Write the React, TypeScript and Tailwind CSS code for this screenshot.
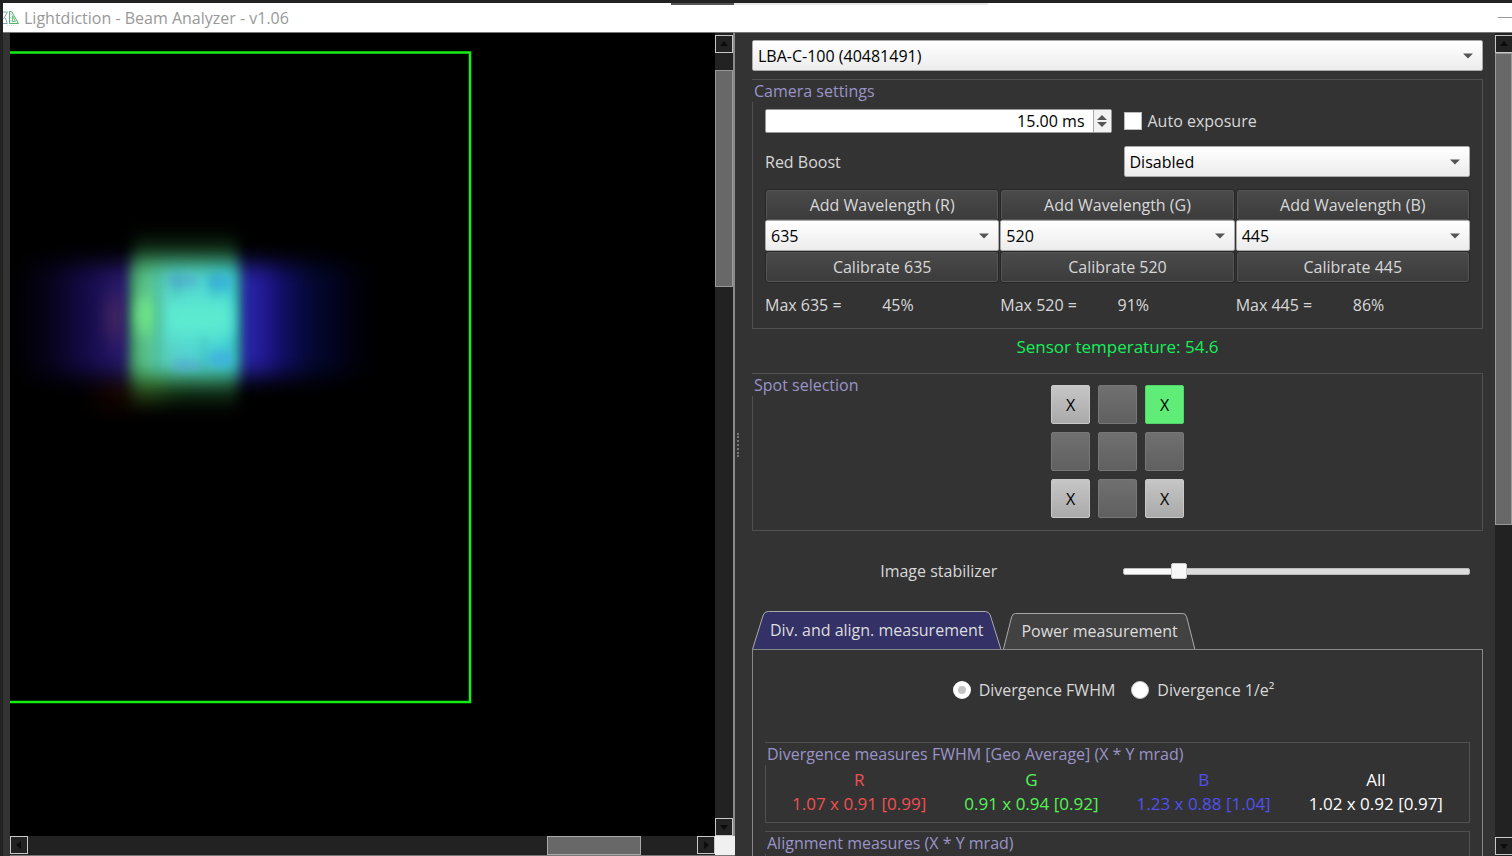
import { useState } from 'react'
import type { ReactNode } from 'react'
import { clsx } from 'clsx'

type Direction = 'up' | 'down' | 'left' | 'right'

const arrowPoints: Record<Direction, string> = {
  up: '1,7 9,7 5,2',
  down: '1,3 9,3 5,8',
  left: '7,1 7,9 2,5',
  right: '3,1 3,9 8,5',
}

const wavelengths = [
  { channel: 'R', value: '635', max: '45%' },
  { channel: 'G', value: '520', max: '91%' },
  { channel: 'B', value: '445', max: '86%' },
]

const divergence = [
  { name: 'R', value: '1.07 x 0.91 [0.99]', color: 'text-[#f05050]' },
  { name: 'G', value: '0.91 x 0.94 [0.92]', color: 'text-[#55f555]' },
  { name: 'B', value: '1.23 x 0.88 [1.04]', color: 'text-[#5050f0]' },
  { name: 'All', value: '1.02 x 0.92 [0.97]', color: 'text-white' },
]

// row by row, null is an empty position
const spots = ['on', null, 'selected', null, null, null, 'on', null, 'on']

function ScrollButton({ direction }: { direction: Direction }) {
  return (
    <button
      aria-label={`Scroll ${direction}`}
      className="flex size-[18px] shrink-0 items-center justify-center border border-[#c8c8c8] bg-[#222]"
    >
      <svg viewBox="0 0 10 10" className="size-2.5">
        <polygon points={arrowPoints[direction]} fill="#0c0c0c" />
      </svg>
    </button>
  )
}

function Select({ label, id, options, className }: { label: string; id: string; options: string[]; className?: string }) {
  return (
    <div className={clsx('relative', className)}>
      <select
        id={id}
        aria-label={label}
        className="block h-[31px] w-full appearance-none rounded-xs border border-[#aaa] bg-linear-to-b from-white to-[#ececec] px-[5px] text-black"
      >
        {options.map((option) => (
          <option key={option}>{option}</option>
        ))}
      </select>
      <svg viewBox="0 0 10 6" className="pointer-events-none absolute top-[13px] right-2.5 h-1.5 w-2.5">
        <polygon points="0,0.5 10,0.5 5,5.5" fill="#555" />
      </svg>
    </div>
  )
}

function Group({ title, className, children }: { title: string; className?: string; children?: ReactNode }) {
  return (
    <section className={clsx('border border-[#505050]', className)}>
      <h2 className="-ml-px w-fit bg-[#333] pl-0.5 leading-[22px] text-[#9a94c8]">{title}</h2>
      {children}
    </section>
  )
}

function DarkButton({ children }: { children: ReactNode }) {
  return (
    <button className="mx-px h-[30px] rounded-xs border border-[#555] bg-linear-to-b from-[#4a4a4a] to-[#3c3c3c] text-[#d8d8d8] outline outline-[#262626]">
      {children}
    </button>
  )
}

function Tab({ label, active, onClick }: { label: string; active: boolean; onClick: () => void }) {
  return (
    <button
      role="tab"
      aria-selected={active}
      onClick={onClick}
      className={clsx('relative px-[18px] text-[#ddd]', active ? 'h-[38px]' : 'h-9')}
    >
      <svg
        viewBox="0 0 200 38"
        preserveAspectRatio="none"
        className="absolute inset-0 size-full"
        fill={active ? '#333166' : '#424242'}
        stroke="#aaa"
      >
        <path d="M0.5 38 L9 4 Q10 0.5 13 0.5 H187 Q190 0.5 191 4 L199.5 38" vectorEffect="non-scaling-stroke" />
      </svg>
      <span className="relative">{label}</span>
    </button>
  )
}

function TitleBar() {
  return (
    <header className="relative mt-[3px] ml-[3px] flex h-[30px] shrink-0 items-center border-b border-[#777] bg-white">
      <svg viewBox="0 0 17 18" className="h-[18px] w-[17px] shrink-0" fill="none">
        <path d="M0 3H4.500L0.500 10M0 14.500H4.500M2.500 9L4 14" stroke="#86a5b8" />
        <path d="M6.500 14.500V2.500H8.500L15.500 14.500Z" stroke="#4db368" />
        <path d="M9.500 12.500V7L12.500 12.500Z" stroke="#4db368" strokeWidth="0.8" />
        <path d="M7 4.500L9.500 6.500M7 8L9.500 10M7 11.500L9.500 12.500M10 6L12 10" stroke="#8fd0a0" strokeWidth="0.8" />
        <path d="M4 16.500H16" stroke="#d5e2da" strokeDasharray="1 1" />
      </svg>
      <h1 className="ml-1 text-[#999]">Lightdiction - Beam Analyzer - v1.06</h1>
      <div className="absolute top-0 left-[44.3%] flex h-0.5 w-[21%]">
        <span className="flex-[62] bg-[#555]" />
        <span className="flex-[250] bg-[#e8e8e8]" />
      </div>
      <button aria-label="Minimize" className="ml-auto flex h-full w-3.5 items-center">
        <span className="h-px w-full bg-[#999]" />
      </button>
    </header>
  )
}

function Blur({ id, x, y }: { id: string; x: number; y: number }) {
  return (
    <filter id={id} x="-100%" y="-100%" width="300%" height="300%" colorInterpolationFilters="sRGB">
      <feGaussianBlur stdDeviation={`${x} ${y}`} />
    </filter>
  )
}

function BeamView() {
  return (
    <svg width="705" height="803" viewBox="10 33 705 803" className="block">
      <defs>
        <Blur id="fine" x={4} y={5} />
        <Blur id="core-edge" x={6} y={9} />
        <Blur id="blue-edge" x={8} y={11} />
        <Blur id="halo" x={7} y={14} />
        <Blur id="soft" x={14} y={14} />
        <linearGradient id="blue">
          <stop offset="0" stopColor="#08031c" stopOpacity="0" />
          <stop offset="0.1" stopColor="#07031c" />
          <stop offset="0.2" stopColor="#150b4a" />
          <stop offset="0.3" stopColor="#2a1a70" />
          <stop offset="0.4" stopColor="#3a3aa0" />
          <stop offset="0.6" stopColor="#2c2cac" />
          <stop offset="0.66" stopColor="#241c9c" />
          <stop offset="0.72" stopColor="#110e66" />
          <stop offset="0.79" stopColor="#050836" />
          <stop offset="0.88" stopColor="#01021a" />
          <stop offset="1" stopColor="#000" stopOpacity="0" />
        </linearGradient>
        <linearGradient id="core">
          <stop offset="0" stopColor="#4aa870" />
          <stop offset="0.18" stopColor="#5cc893" />
          <stop offset="0.38" stopColor="#56d2cc" />
          <stop offset="0.7" stopColor="#4fd8d4" />
          <stop offset="1" stopColor="#35c4d4" />
        </linearGradient>
      </defs>
      <rect x="10" y="33" width="705" height="803" fill="#000" />
      <ellipse cx="122" cy="392" rx="30" ry="12" fill="#200800" filter="url(#soft)" />
      <rect x="14" y="264" width="372" height="112" fill="url(#blue)" filter="url(#blue-edge)" />
      <ellipse cx="115" cy="318" rx="9" ry="24" fill="#55305c" opacity="0.7" filter="url(#blue-edge)" />
      <rect x="133" y="252" width="104" height="138" fill="#2c7a38" filter="url(#halo)" />
      <rect x="136" y="370" width="28" height="22" fill="#4a7a14" opacity="0.7" filter="url(#soft)" />
      <rect x="132" y="266" width="106" height="108" fill="url(#core)" filter="url(#core-edge)" />
      <ellipse cx="146" cy="315" rx="11" ry="20" fill="#72e888" opacity="0.85" filter="url(#core-edge)" />
      <rect x="166" y="298" width="66" height="40" fill="#5cead0" filter="url(#core-edge)" />
      <ellipse cx="182" cy="281" rx="18" ry="6" fill="#53a0cf" filter="url(#fine)" opacity="0.6" />
      <ellipse cx="219" cy="282" rx="12" ry="8" fill="#38a9de" filter="url(#fine)" opacity="0.7" />
      <ellipse cx="187" cy="365" rx="16" ry="6" fill="#5aa4dc" filter="url(#fine)" opacity="0.6" />
      <ellipse cx="220" cy="359" rx="13" ry="8" fill="#3fa8e2" filter="url(#fine)" opacity="0.7" />
      <path
        d="M157 268V374M177 268V298M204 336V374M214 268V298"
        fill="none"
        stroke="#2b9da5"
        strokeWidth="5"
        opacity="0.35"
        filter="url(#fine)"
      />
      <path d="M10 52.500H470V702H10" fill="none" stroke="#14ee14" strokeWidth="2.500" />
    </svg>
  )
}

function CameraPane() {
  return (
    <div className="ml-[3px] flex min-w-0 flex-col border-l-[7px] border-[#333]">
      <div className="flex min-h-0 flex-1">
        <div className="min-w-0 flex-1 overflow-hidden bg-black">
          <BeamView />
        </div>
        <div className="flex w-5 shrink-0 flex-col border-r-2 border-[#8a8a8a] bg-[#222] pt-0.5">
          <ScrollButton direction="up" />
          <div className="flex-[17]" />
          <div className="flex-[216] border border-[#999] bg-[#686868]" />
          <div className="flex-[532]" />
          <ScrollButton direction="down" />
        </div>
      </div>
      <div className="flex h-5 shrink-0 border-b border-[#777] bg-[#222]">
        <div className="flex flex-1">
          <ScrollButton direction="left" />
          <div className="flex-[522]" />
          <div className="flex-[93] border border-[#aaa] bg-[#686868]" />
          <div className="flex-[56]" />
          <ScrollButton direction="right" />
        </div>
        <div className="w-5 bg-[#f0f0f0]" />
      </div>
    </div>
  )
}

function CameraSettings() {
  const [exposure, setExposure] = useState(15)

  return (
    <Group title="Camera settings" className="mt-2 pb-[11px]">
      <div className="mx-3 mt-[7px] grid grid-cols-2 gap-x-3 gap-y-[13px]">
        <div className="flex h-6 rounded-xs border border-[#999] bg-white text-black">
          <input
            aria-label="Exposure time"
            className="min-w-0 flex-1 pr-2 text-right"
            value={`${exposure.toFixed(2)} ms`}
            readOnly
          />
          <div className="flex w-[18px] flex-col items-center justify-center gap-0.5 border-l border-[#aaa] bg-[#f2f2f2]">
            <button aria-label="Increase exposure" onClick={() => setExposure(exposure + 1)}>
              <svg viewBox="0 0 10 5" className="block h-[5px] w-2.5">
                <polygon points="0,5 10,5 5,0" fill="#555" />
              </svg>
            </button>
            <button aria-label="Decrease exposure" onClick={() => setExposure(Math.max(0, exposure - 1))}>
              <svg viewBox="0 0 10 5" className="block h-[5px] w-2.5">
                <polygon points="0,0 10,0 5,5" fill="#555" />
              </svg>
            </button>
          </div>
        </div>
        <label className="flex items-center gap-1.5">
          <input type="checkbox" className="size-[18px] appearance-none border border-[#bbb] bg-white checked:bg-[#5bed78]" />
          Auto exposure
        </label>
        <label htmlFor="red-boost" className="self-center">
          Red Boost
        </label>
        <Select id="red-boost" label="Red Boost" options={['Disabled', 'Enabled']} />
      </div>
      <div className="mx-3 mt-[13px] grid grid-cols-3 gap-x-px">
        {wavelengths.map(({ channel, value, max }) => (
          <div key={channel} className="flex flex-col">
            <DarkButton>Add Wavelength ({channel})</DarkButton>
            <Select id={`wavelength-${channel}`} label={`Wavelength ${channel}`} options={[value]} className="mb-px" />
            <DarkButton>Calibrate {value}</DarkButton>
            <p className="mt-[11px] grid grid-cols-2">
              <span>Max {value} =</span>
              <span>{max}</span>
            </p>
          </div>
        ))}
      </div>
    </Group>
  )
}

function SpotSelection() {
  return (
    <Group title="Spot selection" className="mt-3.5 pb-3">
      <div className="-mt-[11px] grid grid-cols-[repeat(3,39px)] justify-center gap-2">
        {spots.map((spot, i) => (
          <button
            key={i}
            aria-label={`Spot ${i + 1}`}
            className={clsx(
              'size-[39px] rounded-xs border text-black',
              spot === 'selected' && 'border-[#4fd568] bg-[#5fed78]',
              spot === 'on' && 'border-[#c8c8c8] bg-linear-to-b from-[#c6c6c6] to-[#aaa]',
              !spot && 'border-[#777] bg-linear-to-b from-[#707070] to-[#606060]',
            )}
          >
            {spot && 'X'}
          </button>
        ))}
      </div>
    </Group>
  )
}

function Stabilizer() {
  const [value, setValue] = useState(145)
  const percent = value / 10

  return (
    <div className="mx-[13px] mt-7 grid grid-cols-2 items-center gap-x-2.5">
      <label htmlFor="stabilizer" className="text-center">
        Image stabilizer
      </label>
      <input
        id="stabilizer"
        type="range"
        min="0"
        max="1000"
        value={value}
        onChange={(e) => setValue(Number(e.target.value))}
        style={{ background: `linear-gradient(to right, #fafafa ${percent}%, #dcdcdc ${percent}%)` }}
        className="h-[7px] w-full appearance-none rounded-xs border border-[#bbb] [&::-webkit-slider-thumb]:size-4 [&::-webkit-slider-thumb]:appearance-none [&::-webkit-slider-thumb]:rounded-xs [&::-webkit-slider-thumb]:border [&::-webkit-slider-thumb]:border-[#ccc] [&::-webkit-slider-thumb]:bg-[#f8f8f8]"
      />
    </div>
  )
}

function Measurements() {
  const [tab, setTab] = useState('divergence')
  const radio =
    'size-[18px] appearance-none rounded-full border border-[#ccc] bg-white checked:border-[5px] checked:border-white checked:bg-[#c4c4c4]'

  return (
    <div className="mt-7">
      <div role="tablist" className="flex items-end gap-0.5">
        <Tab label="Div. and align. measurement" active={tab === 'divergence'} onClick={() => setTab('divergence')} />
        <Tab label="Power measurement" active={tab === 'power'} onClick={() => setTab('power')} />
      </div>
      <div className="border border-[#888] px-3 pb-3">
        <div className="mt-7 flex justify-center gap-4 pr-2">
          <label className="flex items-center gap-2">
            <input type="radio" name="width" defaultChecked className={radio} />
            Divergence FWHM
          </label>
          <label className="flex items-center gap-2">
            <input type="radio" name="width" className={radio} />
            Divergence 1/e²
          </label>
        </div>
        <Group title="Divergence measures FWHM [Geo Average] (X * Y mrad)" className="mt-10 pb-1.5">
          <table className="mx-auto mt-[3px] w-[98%] table-fixed text-center text-[17px] leading-6">
            <thead>
              <tr>
                {divergence.map((d) => (
                  <th key={d.name} className={clsx('p-0 font-normal', d.color)}>
                    {d.name}
                  </th>
                ))}
              </tr>
            </thead>
            <tbody>
              <tr>
                {divergence.map((d) => (
                  <td key={d.name} className={clsx('p-0', d.color)}>
                    {d.value}
                  </td>
                ))}
              </tr>
            </tbody>
          </table>
        </Group>
        <Group title="Alignment measures (X * Y mrad)" className="mt-2 pb-12" />
      </div>
    </div>
  )
}

export default function App() {
  return (
    <div className="flex h-screen flex-col overflow-hidden bg-[#222] font-['Open_Sans','Noto_Sans',sans-serif] text-base leading-6 text-[#d8d8d8]">
      <TitleBar />
      <main className="grid min-h-0 flex-1 grid-cols-[735fr_777fr] grid-rows-[minmax(0,1fr)]">
        <CameraPane />
        <div className="flex min-w-0 bg-[#333]">
          <div className="flex w-[17px] shrink-0 items-center pl-0.5">
            <span className="h-6 border-l-2 border-dotted border-[#777]" />
          </div>
          <div className="min-w-0 flex-1 overflow-hidden pt-[7px]">
            <Select id="camera" label="Camera" options={['LBA-C-100 (40481491)']} />
            <CameraSettings />
            <p className="mt-1.5 text-center text-[17px] text-[#14f05a]">Sensor temperature: 54.6</p>
            <SpotSelection />
            <Stabilizer />
            <Measurements />
          </div>
          <div className="ml-3 flex w-[17px] shrink-0 flex-col overflow-hidden bg-[#222] pt-0.5 pb-px">
            <ScrollButton direction="up" />
            <div className="flex-[471] border border-[#999] bg-[#686868]" />
            <div className="flex-[312]" />
            <ScrollButton direction="down" />
          </div>
        </div>
      </main>
    </div>
  )
}
